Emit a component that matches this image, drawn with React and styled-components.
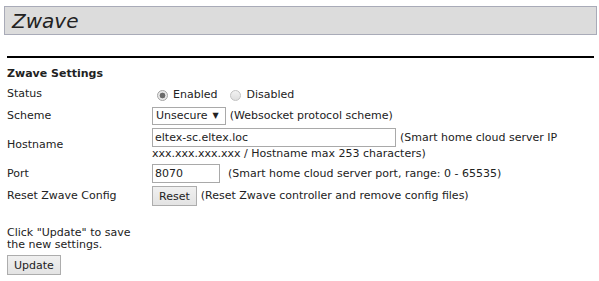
import React from "react";
import styled, { createGlobalStyle } from "styled-components";

const GlobalStyle = createGlobalStyle`
  body {
    margin: 0;
    background: #fff;
    font-family: "DejaVu Sans", Verdana, sans-serif;
    font-size: 11px;
    color: #222;
  }
`;

const Page = styled.div`
  width: 599px;
  padding-top: 6px;
`;

const Header = styled.div`
  margin: 0 2px 0 4px;
  height: 27px;
  background: #dcdcdc;
  border: 1px solid #a9abb8;
  padding-left: 7px;
  display: flex;
  align-items: center;
`;

const HeaderTitle = styled.h1`
  margin: 0;
  font-size: 20px;
  font-weight: normal;
  font-style: italic;
  color: #222;
`;

const Rule = styled.hr`
  margin: 21px 5px 0 7px;
  border: none;
  border-top: 2px solid #000;
  height: 0;
`;

const Section = styled.div`
  padding: 9px 0 0 7px;
`;

const SectionTitle = styled.div`
  font-weight: bold;
  margin-bottom: 3px;
`;

const FormTable = styled.div`
  display: grid;
  grid-template-columns: 145px 1fr;
  row-gap: 3px;
  align-items: center;
`;

const Label = styled.div`
  line-height: 18px;
`;

const Value = styled.div`
  display: flex;
  align-items: center;
  gap: ${(p) => p.$gap || 4}px;
  line-height: 18px;
`;

const FlowValue = styled.div`
  line-height: 14px;
  padding-right: 6px;
`;

const RadioLabel = styled.label`
  display: inline-flex;
  align-items: center;
  gap: 5px;
  margin-right: 4px;
  padding-top: 3px;
`;

const RadioDot = styled.span`
  width: 11px;
  height: 11px;
  border-radius: 50%;
  border: 1px solid ${(p) => (p.$checked ? "#a4a4a4" : "#c2c2c2")};
  background: ${(p) =>
    p.$checked
      ? "radial-gradient(circle, #6a6a6a 0 2.6px, #e8e8e8 3.2px)"
      : "linear-gradient(#f2f2f2, #dedede)"};
  box-sizing: border-box;
  margin-left: 5px;
`;

const Select = styled.div`
  display: inline-flex;
  align-items: center;
  height: 18px;
  box-sizing: border-box;
  border: 1px solid #a9a9a9;
  padding: 0 6px 0 3px;
  gap: 5px;
  background: #fff;
  font-size: 11px;
`;

const Caret = styled.span`
  font-size: 8px;
`;

const TextInput = styled.input`
  font-family: inherit;
  font-size: 11px;
  color: #222;
  width: ${(p) => p.$width}px;
  height: 19px;
  box-sizing: border-box;
  border: 1px solid #a9a9a9;
  padding: 0 2px;
  margin: 0 4px 0 0;
  vertical-align: middle;
  outline: none;
`;

const Button = styled.button`
  font-family: inherit;
  font-size: 11px;
  color: #222;
  height: 20px;
  padding: 0 6px;
  border: 1px solid #adadad;
  background: linear-gradient(#f0f0f0, #e3e3e3);
  border-radius: 0;
`;

const Note = styled.div`
  margin-top: 21px;
  width: 125px;
  line-height: 12px;
`;

const UpdateRow = styled.div`
  margin-top: 4px;
`;

export default function App() {
  return (
    <Page>
      <GlobalStyle />
      <Header>
        <HeaderTitle>Zwave</HeaderTitle>
      </Header>
      <Rule />
      <Section>
        <SectionTitle>Zwave Settings</SectionTitle>
        <FormTable>
          <Label>Status</Label>
          <Value $gap={0}>
            <RadioLabel>
              <RadioDot $checked />
              Enabled
            </RadioLabel>
            <RadioLabel>
              <RadioDot />
              Disabled
            </RadioLabel>
          </Value>

          <Label>Scheme</Label>
          <Value>
            <Select>
              Unsecure <Caret>▼</Caret>
            </Select>
            (Websocket protocol scheme)
          </Value>

          <Label>Hostname</Label>
          <FlowValue>
            <TextInput $width={244} defaultValue="eltex-sc.eltex.loc" />
            (Smart home cloud server IP xxx.xxx.xxx.xxx / Hostname max 253
            characters)
          </FlowValue>

          <Label>Port</Label>
          <Value>
            <TextInput $width={68} defaultValue="8070" />
            (Smart home cloud server port, range: 0 - 65535)
          </Value>

          <Label>Reset Zwave Config</Label>
          <Value>
            <Button>Reset</Button>
            (Reset Zwave controller and remove config files)
          </Value>
        </FormTable>
        <Note>Click "Update" to save the new settings.</Note>
        <UpdateRow>
          <Button>Update</Button>
        </UpdateRow>
      </Section>
    </Page>
  );
}
